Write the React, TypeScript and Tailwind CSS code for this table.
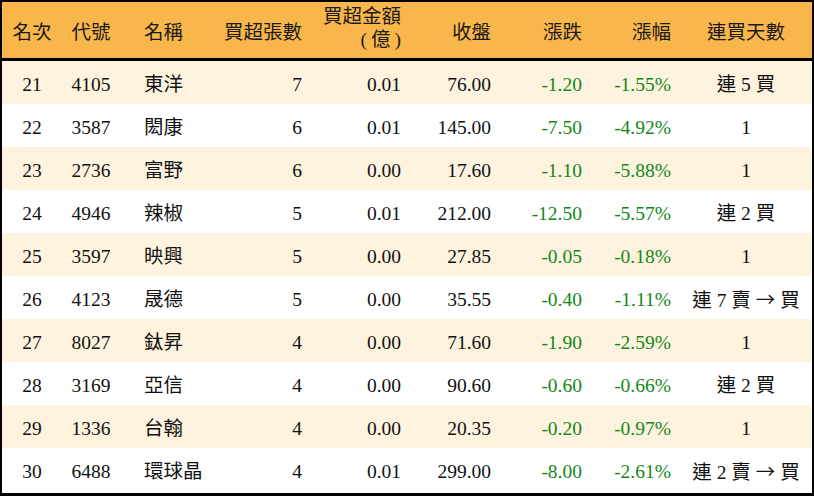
import React from "react";

type Row = {
  rank: number;
  code: string;
  name: string;
  lots: number;
  amount: string;
  close: string;
  change: string;
  pct: string;
  streak: string;
};

const rows: Row[] = [
  { rank: 21, code: "4105", name: "東洋", lots: 7, amount: "0.01", close: "76.00", change: "-1.20", pct: "-1.55%", streak: "連 5 買" },
  { rank: 22, code: "3587", name: "閎康", lots: 6, amount: "0.01", close: "145.00", change: "-7.50", pct: "-4.92%", streak: "1" },
  { rank: 23, code: "2736", name: "富野", lots: 6, amount: "0.00", close: "17.60", change: "-1.10", pct: "-5.88%", streak: "1" },
  { rank: 24, code: "4946", name: "辣椒", lots: 5, amount: "0.01", close: "212.00", change: "-12.50", pct: "-5.57%", streak: "連 2 買" },
  { rank: 25, code: "3597", name: "映興", lots: 5, amount: "0.00", close: "27.85", change: "-0.05", pct: "-0.18%", streak: "1" },
  { rank: 26, code: "4123", name: "晟德", lots: 5, amount: "0.00", close: "35.55", change: "-0.40", pct: "-1.11%", streak: "連 7 賣 → 買" },
  { rank: 27, code: "8027", name: "鈦昇", lots: 4, amount: "0.00", close: "71.60", change: "-1.90", pct: "-2.59%", streak: "1" },
  { rank: 28, code: "3169", name: "亞信", lots: 4, amount: "0.00", close: "90.60", change: "-0.60", pct: "-0.66%", streak: "連 2 買" },
  { rank: 29, code: "1336", name: "台翰", lots: 4, amount: "0.00", close: "20.35", change: "-0.20", pct: "-0.97%", streak: "1" },
  { rank: 30, code: "6488", name: "環球晶", lots: 4, amount: "0.01", close: "299.00", change: "-8.00", pct: "-2.61%", streak: "連 2 賣 → 買" },
];

// column widths shared by header and body
const c1 = "w-[60px] text-center";
const c2 = "w-[58px] text-center";
const c3 = "w-[100px] pl-[24px] text-left";
const c4 = "w-[90px] pr-[8px] text-right";
const c5 = "w-[99px] pr-[8px] text-right";
const c6 = "w-[91px] pr-[9px] text-right";
const c7 = "w-[90px] pr-[8px] text-right";
const c8 = "w-[90px] pr-[9px] text-right";
const c9 = "flex-1 text-center";

function Streak({ text }: { text: string }) {
  // the arrow is drawn from the CJK font so it gets its full-width shape
  const parts = text.split("→");
  if (parts.length === 1) return <>{text}</>;
  return (
    <>
      {parts[0]}
      <span style={{ fontFamily: '"Noto Sans CJK TC", sans-serif' }}>→</span>
      {parts[1]}
    </>
  );
}

export default function App() {
  return (
    <div
      className="box-border h-[496px] w-[814px] overflow-hidden border-2 border-b-[3px] border-black bg-white text-[19.5px] text-[#111]"
      style={{ fontFamily: '"Liberation Serif", "Noto Sans CJK TC", serif' }}
    >
      <div className="flex h-[59px] items-center border-b-[3px] border-black bg-[#f9b64b] pt-[6px] text-[#1a1a1a]">
        <div className={c1}>名次</div>
        <div className={c2}>代號</div>
        <div className={c3}>名稱</div>
        <div className={c4}>買超張數</div>
        <div className={`${c5} pb-[10px] leading-[23px]`}>
          買超金額
          <br />
          <span className="pr-[4px]">(</span>億<span className="pl-[4px]">)</span>
        </div>
        <div className={c6}>收盤</div>
        <div className={c7}>漲跌</div>
        <div className={c8}>漲幅</div>
        <div className={c9}>連買天數</div>
      </div>

      {rows.map((r, i) => (
        <div
          key={r.rank}
          className={`flex h-[43px] items-center pt-[5px] ${i % 2 === 0 ? "bg-[#fef3df]" : "bg-white"}`}
        >
          <div className={c1}>{r.rank}</div>
          <div className={c2}>{r.code}</div>
          <div className={c3}>{r.name}</div>
          <div className={c4}>{r.lots}</div>
          <div className={c5}>{r.amount}</div>
          <div className={c6}>{r.close}</div>
          <div className={`${c7} text-[#13871a]`}>{r.change}</div>
          <div className={`${c8} text-[#13871a]`}>{r.pct}</div>
          <div className={`${c9} whitespace-pre`}>
            <Streak text={r.streak} />
          </div>
        </div>
      ))}
    </div>
  );
}
